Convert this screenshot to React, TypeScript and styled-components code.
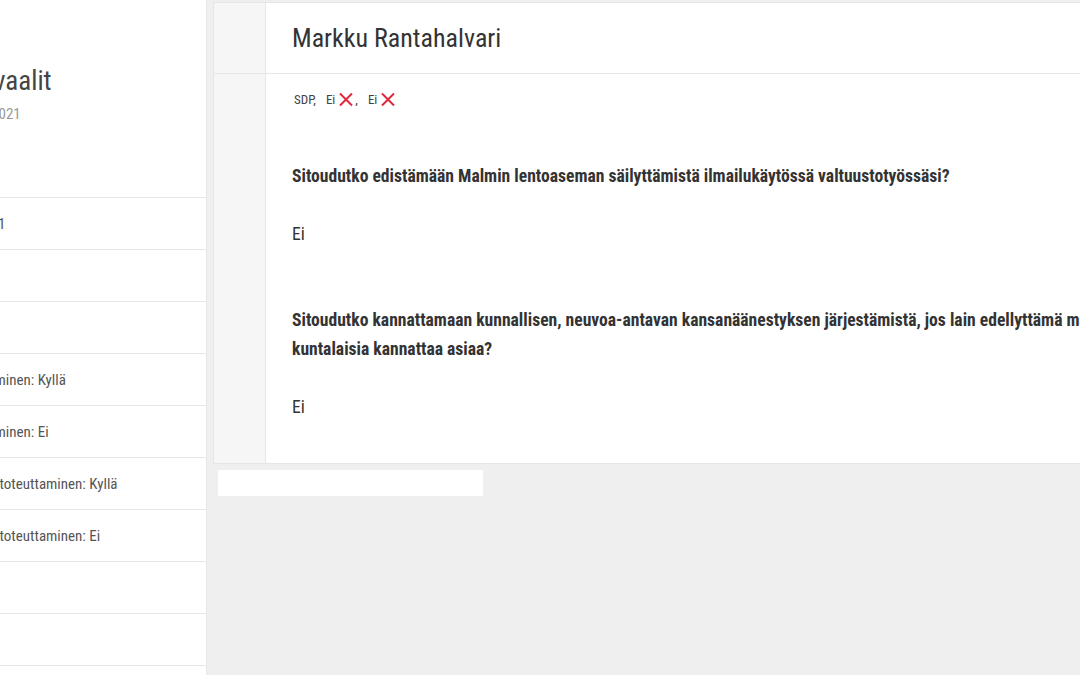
import React from 'react';
import styled, { createGlobalStyle } from 'styled-components';

const GlobalStyle = createGlobalStyle`
  html, body {
    margin: 0;
    padding: 0;
    overflow: hidden;
  }
  body {
    font-family: "Roboto Condensed", Roboto, "Liberation Sans", sans-serif;
    color: #333;
    background: #efefef;
  }
  * {
    box-sizing: border-box;
  }
`;

type Answer = 'Kyllä' | 'Ei';

interface QA {
  question: string;
  answer: Answer;
}

const filters = [
  'Kaikki ehdokkaat – vaalit 2021',
  'Vastanneet',
  'Ei vastanneet',
  'Malmin lentoaseman säilyttäminen: Kyllä',
  'Malmin lentoaseman säilyttäminen: Ei',
  'Kansanäänestyksen tuloksen toteuttaminen: Kyllä',
  'Kansanäänestyksen tuloksen toteuttaminen: Ei',
  'Kaikki',
  'Tyhjennä',
  '',
];

const answers: QA[] = [
  {
    question: 'Sitoudutko edistämään Malmin lentoaseman säilyttämistä ilmailukäytössä valtuustotyössäsi?',
    answer: 'Ei',
  },
  {
    question:
      'Sitoudutko kannattamaan kunnallisen, neuvoa-antavan kansanäänestyksen järjestämistä, jos lain edellyttämä määrä kuntalaisia kannattaa asiaa?',
    answer: 'Ei',
  },
];

const CrossIcon: React.FC = () => (
  <svg width="16" height="15" viewBox="0 0 16 15" aria-hidden="true">
    <path d="M2 1.5 L14 13.5 M14 1.5 L2 13.5" stroke="#e0283f" strokeWidth="2" />
  </svg>
);

const App: React.FC = () => {
  return (
    <>
      <GlobalStyle />
      <Layout>
        <Sidebar>
          <SidebarInner>
            <SidebarHeader>
              <SidebarTitle>Helsingin kuntavaalit</SidebarTitle>
              <SidebarSubtitle>Ehdokkaiden vastaukset 06/2021</SidebarSubtitle>
            </SidebarHeader>
            {filters.map((label, i) => (
              <FilterRow key={i}>{label}</FilterRow>
            ))}
          </SidebarInner>
        </Sidebar>

        <Main>
          <CandidateCard>
            <CardHeader>
              <Stripe />
              <CandidateName>Markku Rantahalvari</CandidateName>
            </CardHeader>
            <CardBody>
              <Stripe />
              <BodyContent>
                <TagList>
                  <Tag>SDP,</Tag>
                  <Tag>
                    Ei
                    <CrossIcon />
                    <Comma>,</Comma>
                  </Tag>
                  <Tag>
                    Ei
                    <CrossIcon />
                  </Tag>
                </TagList>
                {answers.map((qa) => (
                  <AnswerBlock key={qa.question}>
                    <Question>{qa.question}</Question>
                    <AnswerText>{qa.answer}</AnswerText>
                  </AnswerBlock>
                ))}
              </BodyContent>
            </CardBody>
          </CandidateCard>
          <Pager />
        </Main>
      </Layout>
    </>
  );
};

const Layout = styled.div`
  display: flex;
  width: 1080px;
  height: 675px;
  overflow: hidden;
`;

const Sidebar = styled.aside`
  flex: 0 0 207px;
  height: 100%;
  background: #fff;
  border-right: 1px solid #e8e8e8;
  overflow: hidden;
`;

// the menu is scrolled off to the left, only its tail shows
const SidebarInner = styled.div`
  width: 397px;
  margin-left: -191px;
`;

const SidebarHeader = styled.div`
  height: 197px;
  padding: 64px 15px 0 20px;
`;

const SidebarTitle = styled.h1`
  margin: 0;
  font-size: 27px;
  font-weight: 400;
  line-height: 34px;
  color: #444;
  white-space: nowrap;
`;

const SidebarSubtitle = styled.div`
  margin-top: 6px;
  margin-left: -5px;
  font-size: 15px;
  line-height: 20px;
  color: #999;
  white-space: nowrap;
`;

const FilterRow = styled.div`
  height: 52px;
  padding: 0 15px;
  display: flex;
  align-items: center;
  border-top: 1px solid #e6e6e6;
  font-size: 15px;
  color: #555;
  white-space: nowrap;
`;

const Main = styled.main`
  flex: 1;
  min-width: 0;
  padding: 2px 0 0 6px;
  overflow: hidden;
`;

const CandidateCard = styled.section`
  width: 956px;
  background: #fff;
  border: 1px solid #e6e6e6;
  border-right: none;
`;

const CardHeader = styled.div`
  display: flex;
  height: 71px;
  border-bottom: 1px solid #e6e6e6;
`;

const Stripe = styled.div`
  flex: 0 0 52px;
  background: #f6f6f6;
  border-right: 1px solid #e8e8e8;
`;

const CandidateName = styled.h2`
  margin: 0;
  padding-left: 26px;
  align-self: center;
  font-size: 26px;
  font-weight: 400;
  color: #333;
`;

const CardBody = styled.div`
  display: flex;
`;

const BodyContent = styled.div`
  flex: 1;
  padding: 15px 27px 41px 26px;
`;

const TagList = styled.div`
  display: flex;
  align-items: center;
  gap: 10px;
  height: 20px;
  padding-left: 2px;
  font-size: 13px;
  color: #444;
`;

const Tag = styled.span`
  display: inline-flex;
  align-items: center;
  gap: 3px;
`;

const Comma = styled.span`
  margin-left: -2px;
`;

const AnswerBlock = styled.div`
  margin-top: 53px;

  & + & {
    margin-top: 57px;
  }
`;

const Question = styled.p`
  margin: 0;
  font-size: 17.6px;
  font-weight: 700;
  line-height: 29px;
  color: #333;
`;

const AnswerText = styled.p`
  margin: 29px 0 0;
  font-size: 17.6px;
  line-height: 29px;
  color: #333;
`;

const Pager = styled.div`
  width: 265px;
  height: 26px;
  margin: 6px 0 0 5px;
  background: #fff;
`;

export default App;
